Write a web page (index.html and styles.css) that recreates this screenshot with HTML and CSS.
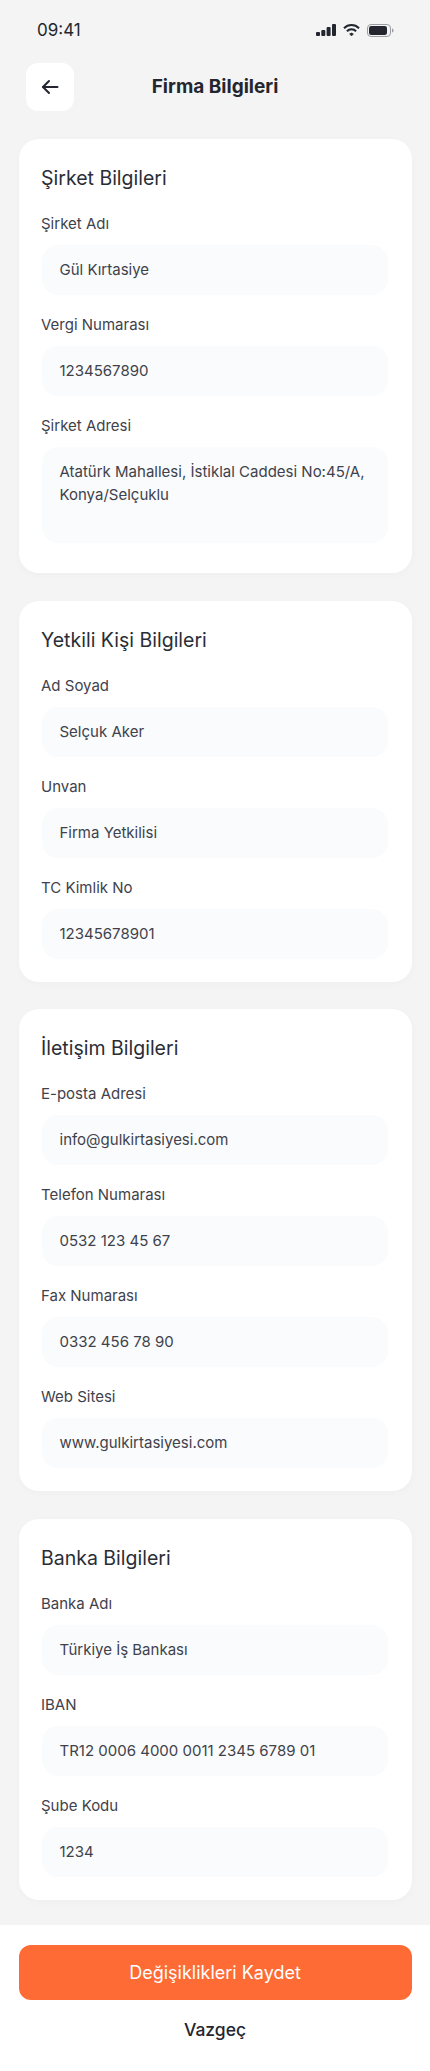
FILE: index.html
```html
<!DOCTYPE html>
<html lang="tr">
<head>
  <meta charset="UTF-8" />
  <meta name="viewport" content="width=device-width, initial-scale=1" />
  <title>Firma Bilgileri</title>
  <link rel="stylesheet" href="styles.css">
</head>
<body>
  <div class="status-bar">
    <span class="time">09:41</span>
    <div class="status-icons">
      <svg width="20" height="12" viewBox="0 0 20 12" fill="#23262f">
        <rect x="0" y="8" width="4" height="4" rx="1" />
        <rect x="5.3" y="6" width="4" height="6" rx="1" />
        <rect x="10.6" y="3" width="4" height="9" rx="1" />
        <rect x="16" y="0" width="4" height="12" rx="1" />
      </svg>
      <svg width="17" height="12" viewBox="0 0 17 12" fill="none" stroke="#23262f" stroke-width="2">
        <path d="M1 4.2a10.6 10.6 0 0 1 15 0" />
        <path d="M3.9 7.2a6.4 6.4 0 0 1 9.2 0" />
        <path d="M6.6 10a2.6 2.6 0 0 1 3.8 0l-1.9 1.9z" fill="#23262f" stroke-width="0.6" />
      </svg>
      <svg width="27" height="13" viewBox="0 0 27 13" fill="none">
        <rect x="0.5" y="0.5" width="23" height="12" rx="3.5" stroke="#9a9ca1" />
        <rect x="2" y="2" width="18" height="9" rx="2.2" fill="#23262f" />
        <path d="M25 4.5c1 .3 1.5 1 1.5 2s-.5 1.700-1.500 2z" fill="#9a9ca1" />
      </svg>
    </div>
  </div>

  <header class="top-bar">
    <button class="back-btn" aria-label="Geri">
      <svg width="20" height="20" viewBox="0 0 20 20" fill="none" stroke="#23262f" stroke-width="2" stroke-linecap="round" stroke-linejoin="round">
        <path d="M17.500 10H3" />
        <path d="M9 4L3 10l6 6" />
      </svg>
    </button>
    <h1>Firma Bilgileri</h1>
  </header>

  <main class="content">
    <section class="card card-address">
      <h2>Şirket Bilgileri</h2>
      <div class="field">
        <label>Şirket Adı</label>
        <div class="input">Gül Kırtasiye</div>
      </div>
      <div class="field">
        <label>Vergi Numarası</label>
        <div class="input">1234567890</div>
      </div>
      <div class="field">
        <label>Şirket Adresi</label>
        <div class="input textarea">Atatürk Mahallesi, İstiklal Caddesi No:45/A, Konya/Selçuklu</div>
      </div>
    </section>

    <section class="card">
      <h2>Yetkili Kişi Bilgileri</h2>
      <div class="field">
        <label>Ad Soyad</label>
        <div class="input">Selçuk Aker</div>
      </div>
      <div class="field">
        <label>Unvan</label>
        <div class="input">Firma Yetkilisi</div>
      </div>
      <div class="field">
        <label>TC Kimlik No</label>
        <div class="input">12345678901</div>
      </div>
    </section>

    <section class="card">
      <h2>İletişim Bilgileri</h2>
      <div class="field">
        <label>E-posta Adresi</label>
        <div class="input">info@gulkirtasiyesi.com</div>
      </div>
      <div class="field">
        <label>Telefon Numarası</label>
        <div class="input">0532 123 45 67</div>
      </div>
      <div class="field">
        <label>Fax Numarası</label>
        <div class="input">0332 456 78 90</div>
      </div>
      <div class="field">
        <label>Web Sitesi</label>
        <div class="input">www.gulkirtasiyesi.com</div>
      </div>
    </section>

    <section class="card">
      <h2>Banka Bilgileri</h2>
      <div class="field">
        <label>Banka Adı</label>
        <div class="input">Türkiye İş Bankası</div>
      </div>
      <div class="field">
        <label>IBAN</label>
        <div class="input">TR12 0006 4000 0011 2345 6789 01</div>
      </div>
      <div class="field">
        <label>Şube Kodu</label>
        <div class="input">1234</div>
      </div>
    </section>
  </main>

  <footer class="bottom-bar">
    <button class="save-btn">Değişiklikleri Kaydet</button>
    <button class="cancel-btn">Vazgeç</button>
  </footer>
</body>
</html>
```

FILE: styles.css
```css
* {
  margin: 0;
  padding: 0;
  box-sizing: border-box;
}

body {
  width: 430px;
  min-height: 2071px;
  background-color: #f4f4f4;
  color: #23262f;
  font-family: "Inter", "Noto Sans", sans-serif;
}

.status-bar {
  height: 63px;
  padding: 18px 36px 0 37px;
  display: flex;
  justify-content: space-between;
  align-items: flex-start;
}

.time {
  font-size: 17px;
  line-height: 24px;
}

.status-icons {
  display: flex;
  align-items: center;
  gap: 7px;
  height: 24px;
}

.top-bar {
  height: 48px;
  margin: 0 26px 28px;
  position: relative;
  display: flex;
  justify-content: center;
  align-items: center;
}

.back-btn {
  position: absolute;
  left: 0;
  top: 0;
  width: 48px;
  height: 48px;
  border: none;
  border-radius: 12px;
  background-color: #fff;
  display: flex;
  align-items: center;
  justify-content: center;
}

.top-bar h1 {
  font-size: 19px;
  font-weight: 700;
  line-height: 28px;
}

.content {
  padding: 0 18.5px;
  display: flex;
  flex-direction: column;
  gap: 27.7px;
}

.card {
  background-color: #fff;
  border-radius: 20px;
  padding: 24px 23.500px 23px;
  box-shadow: 0 2px 8px rgba(0, 0, 0, 0.025);
  display: flex;
  flex-direction: column;
  gap: 20px;
}

.card-address {
  padding-bottom: 30px;
}

.card h2 {
  font-size: 19.5px;
  font-weight: 400;
  line-height: 30px;
  margin-bottom: 1px;
  margin-left: -1px;
  color: #2a2d36;
}

.field label {
  display: block;
  font-size: 15px;
  line-height: 20px;
  margin-left: -1px;
  color: #3f424b;
  margin-bottom: 11px;
}

.input {
  height: 50px;
  padding: 0 17.5px;
  background-color: #f9fbfc;
  border-radius: 16px;
  font-size: 15px;
  line-height: 50px;
  color: #3f424b;
}

.textarea {
  height: 96px;
  padding-top: 13px;
  line-height: 23px;
}

.bottom-bar {
  margin-top: 25px;
  height: 146px;
  padding: 20px 18.5px 0;
  background-color: #fff;
  display: flex;
  flex-direction: column;
  align-items: center;
}

.save-btn {
  width: 100%;
  height: 55px;
  border: none;
  border-radius: 12px;
  background-color: #ff6b35;
  color: #fff;
  font-family: inherit;
  font-size: 18px;
  font-weight: 400;
}

.cancel-btn {
  margin-top: 17px;
  border: none;
  background: transparent;
  color: #23262f;
  font-family: inherit;
  font-size: 17.5px;
  font-weight: 500;
  line-height: 26px;
}
```
